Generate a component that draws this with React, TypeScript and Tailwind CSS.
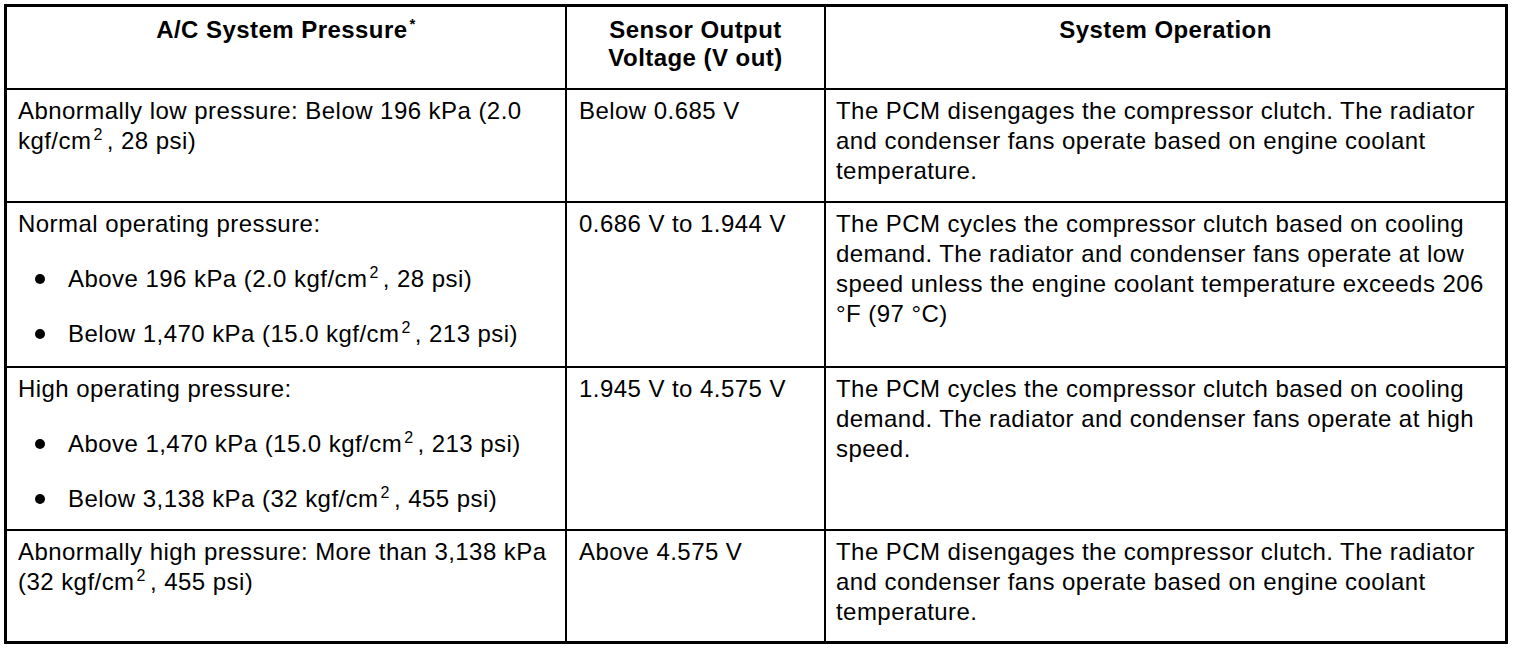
import type { ReactNode } from 'react'

function Sq() {
  return <sup className="text-[16px] -top-[9px] mr-[4px] ml-[2px]">2</sup>
}

function Head({ children }: { children: ReactNode }) {
  return (
    <div className="bg-white pt-[9px] px-[10px] text-center font-bold leading-[28px]">
      {children}
    </div>
  )
}

function Cell({ children, pl = 'pl-[11px]' }: { children: ReactNode; pl?: string }) {
  return <div className={`bg-white pt-[6px] pr-[8px] whitespace-nowrap leading-[30px] ${pl}`}>{children}</div>
}

function Bullet({ children }: { children: ReactNode }) {
  return (
    <div className="flex items-center mt-[25px]">
      <span className="ml-[17px] mr-[23px] w-[10px] h-[10px] rounded-full bg-black" />
      <span>{children}</span>
    </div>
  )
}

const disengage = (
  <>
    The PCM disengages the compressor clutch. The radiator
    <br />
    and condenser fans operate based on engine coolant
    <br />
    temperature.
  </>
)

export default function App() {
  return (
    <div
      className="min-h-[650px] bg-white p-[4px] text-black text-[24px] tracking-[0.45px]"
      style={{ fontFamily: '"Liberation Sans", Arial, Helvetica, sans-serif' }}
    >
      <div className="grid w-fit grid-cols-[558px_257px_679px] grid-rows-[81px_111px_163px_161px_110px] gap-[2px] border-[3px] border-black bg-black">
        <Head>
          A/C System Pressure<sup className="text-[15px] -top-[9px] ml-[2px]">*</sup>
        </Head>
        <Head>
          Sensor Output
          <br />
          Voltage (V out)
        </Head>
        <Head>System Operation</Head>

        <Cell>
          Abnormally low pressure: Below 196 kPa (2.0
          <br />
          kgf/cm<Sq />, 28 psi)
        </Cell>
        <Cell pl="pl-[12px]">Below 0.685 V</Cell>
        <Cell pl="pl-[10px]">{disengage}</Cell>

        <Cell>
          <div>Normal operating pressure:</div>
          <Bullet>
            Above 196 kPa (2.0 kgf/cm<Sq />, 28 psi)
          </Bullet>
          <Bullet>
            Below 1,470 kPa (15.0 kgf/cm<Sq />, 213 psi)
          </Bullet>
        </Cell>
        <Cell pl="pl-[12px]">0.686 V to 1.944 V</Cell>
        <Cell pl="pl-[10px]">
          The PCM cycles the compressor clutch based on cooling
          <br />
          demand. The radiator and condenser fans operate at low
          <br />
          speed unless the engine coolant temperature exceeds 206
          <br />
          °F (97 °C)
        </Cell>

        <Cell>
          <div>High operating pressure:</div>
          <Bullet>
            Above 1,470 kPa (15.0 kgf/cm<Sq />, 213 psi)
          </Bullet>
          <Bullet>
            Below 3,138 kPa (32 kgf/cm<Sq />, 455 psi)
          </Bullet>
        </Cell>
        <Cell pl="pl-[12px]">1.945 V to 4.575 V</Cell>
        <Cell pl="pl-[10px]">
          The PCM cycles the compressor clutch based on cooling
          <br />
          demand. The radiator and condenser fans operate at high
          <br />
          speed.
        </Cell>

        <Cell>
          Abnormally high pressure: More than 3,138 kPa
          <br />
          (32 kgf/cm<Sq />, 455 psi)
        </Cell>
        <Cell pl="pl-[12px]">Above 4.575 V</Cell>
        <Cell pl="pl-[10px]">{disengage}</Cell>
      </div>
    </div>
  )
}
